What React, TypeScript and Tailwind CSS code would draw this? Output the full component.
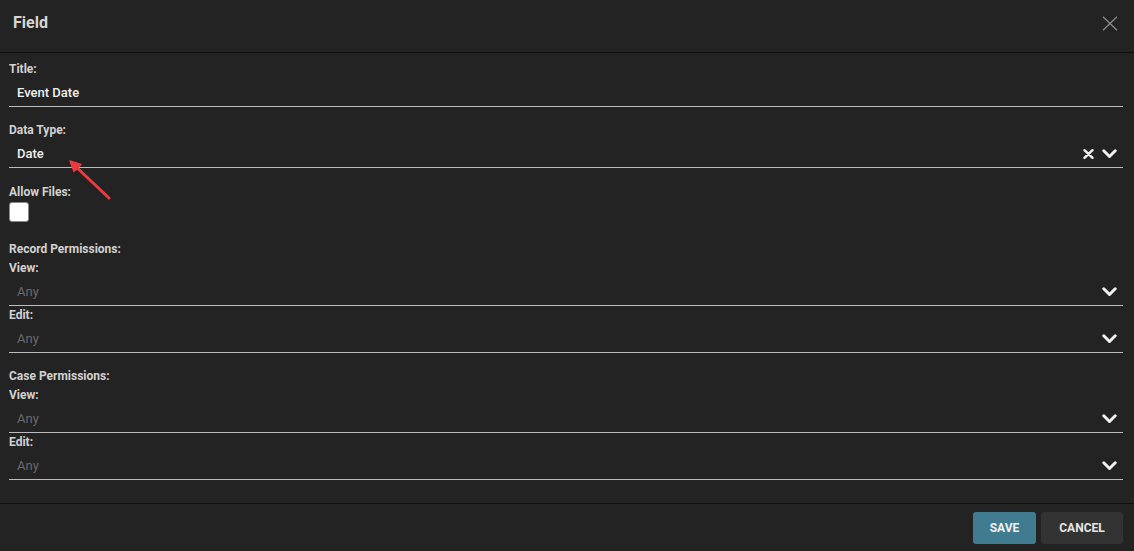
import React from "react";

const ChevronDown = () => (
  <svg width="15" height="10" viewBox="0 0 15 10" className="block">
    <path d="M1.8 1.8 L7.5 7.5 L13.2 1.8" fill="none" stroke="#f2f2f2" strokeWidth="3" strokeLinecap="round" strokeLinejoin="round" />
  </svg>
);

const ClearX = () => (
  <svg width="11" height="10" viewBox="0 0 11 10" className="block">
    <path d="M1.5 1.2 L9.5 8.8 M9.5 1.2 L1.5 8.8" fill="none" stroke="#f2f2f2" strokeWidth="2.4" strokeLinecap="round" />
  </svg>
);

function Label({ children, className = "" }: { children: React.ReactNode; className?: string }) {
  return <div className={`h-[14px] text-[12px] font-bold leading-[14px] text-[#d2d2d2] ${className}`}>{children}</div>;
}

function Row({ value, placeholder, clearable, select }: { value?: string; placeholder?: string; clearable?: boolean; select?: boolean }) {
  return (
    <div className="flex h-[31px] items-center border-b border-[#bdbdbd] pl-2 pr-[6px] pt-[3px]">
      <span className={`flex-1 text-[13px] ${value ? "font-medium text-[#f0f0f0]" : "text-[#6a6a6a]"}`}>{value ?? placeholder}</span>
      {clearable && (
        <span className="mr-[8px]">
          <ClearX />
        </span>
      )}
      {select && <ChevronDown />}
    </div>
  );
}

export default function App() {
  return (
    <div className="relative flex h-[551px] w-[1134px] flex-col bg-[#232323] font-['Roboto',sans-serif]">
      <div className="flex h-[53px] shrink-0 items-center justify-between border-b border-[#0e0e0e] pl-[13px] pr-[16px]">
        <h1 className="-mt-[6px] text-[16px] font-bold text-[#d6d6d6]">Field</h1>
        <svg width="16" height="15" viewBox="0 0 16 15" className="-mt-[6px] block">
          <path d="M1 0.8 L15 14.2 M15 0.8 L1 14.2" fill="none" stroke="#8c8c8c" strokeWidth="1.3" />
        </svg>
      </div>

      <div className="flex-1 pl-[9px] pr-[11px] pt-[9px]">
        <Label>Title:</Label>
        <Row value="Event Date" />

        <Label className="mt-[16px]">Data Type:</Label>
        <Row value="Date" clearable select />

        <Label className="mt-[17px]">Allow Files:</Label>
        <div className="mt-[3px] h-[20px] w-[20px] rounded-[3px] border border-[#8a8a8a] bg-white" />

        <Label className="mt-[20px]">Record Permissions:</Label>
        <Label className="mt-[5px]">View:</Label>
        <Row placeholder="Any" select />
        <Label className="mt-[2px]">Edit:</Label>
        <Row placeholder="Any" select />

        <Label className="mt-[16px]">Case Permissions:</Label>
        <Label className="mt-[5px]">View:</Label>
        <Row placeholder="Any" select />
        <Label className="mt-[2px]">Edit:</Label>
        <Row placeholder="Any" select />
      </div>

      <div className="flex h-[48px] shrink-0 items-center justify-end gap-[5px] border-t border-[#0e0e0e] pr-[11px]">
        <button className="h-[32px] w-[63px] rounded-[3px] bg-[#417b8f] text-[12px] font-bold text-[#f2f2f2]">SAVE</button>
        <button className="h-[32px] w-[82px] rounded-[3px] bg-[#333333] text-[12px] font-bold text-[#e6e6e6]">CANCEL</button>
      </div>

      <svg width="50" height="50" viewBox="0 0 50 50" className="pointer-events-none absolute left-[64px] top-[156px]">
        <path d="M45 42 L9 8" stroke="#ec3b3e" strokeWidth="3" strokeLinecap="round" />
        <path d="M6 5 L17 8.5 L10 15.5 Z" fill="#ec3b3e" stroke="#ec3b3e" strokeWidth="1.5" strokeLinejoin="round" />
      </svg>
    </div>
  );
}
